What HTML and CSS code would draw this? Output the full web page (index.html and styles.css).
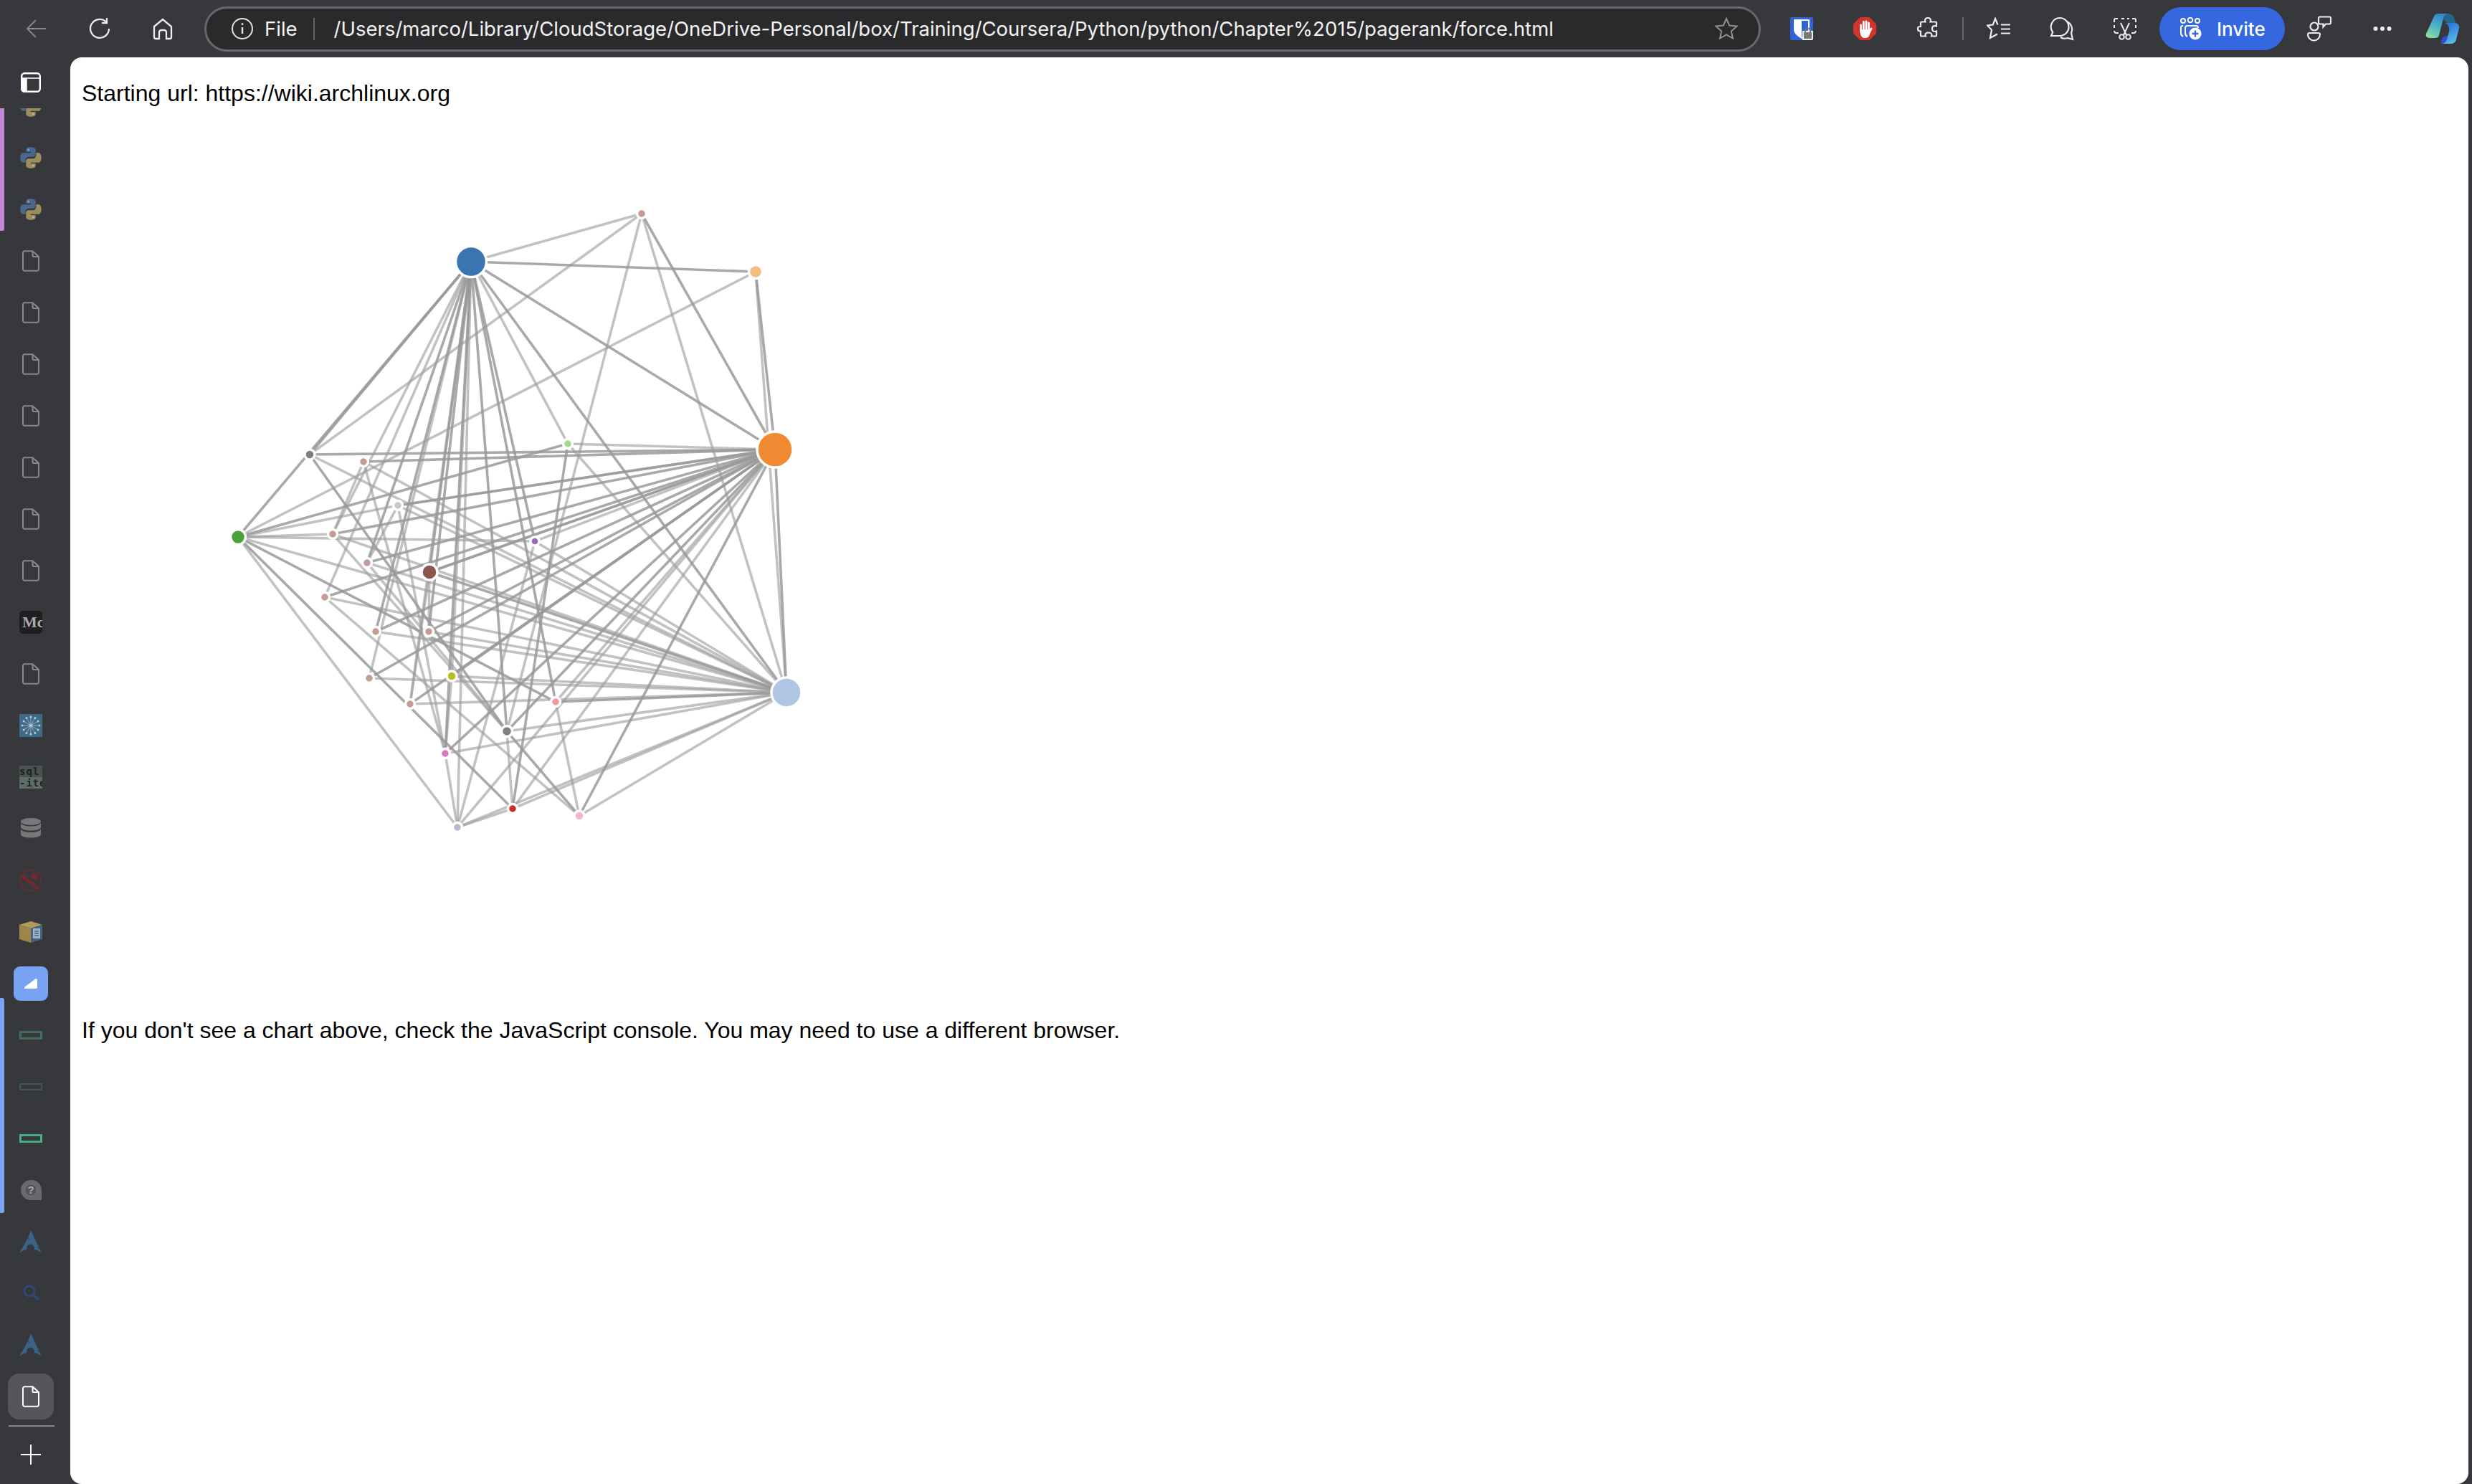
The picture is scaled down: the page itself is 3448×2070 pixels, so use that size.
FILE: index.html
```html
<!DOCTYPE html>
<html lang="en">
<head>
  <meta charset="UTF-8" />
  <title>Force Directed Layout</title>
  <link rel="stylesheet" href="styles.css">
</head>
<body>

  <!-- shared icons -->
  <svg class="sprite" xmlns="http://www.w3.org/2000/svg">
    <defs>
      <linearGradient id="cp-left" x1="0.7" y1="0" x2="0.3" y2="1"><stop offset="0" stop-color="#2f86c9"/><stop offset="0.55" stop-color="#4fb3c8"/><stop offset="1" stop-color="#86dca0"/></linearGradient>
      <linearGradient id="cp-right" x1="0.3" y1="0" x2="0.7" y2="1"><stop offset="0" stop-color="#2a6fd0"/><stop offset="1" stop-color="#5cc2ee"/></linearGradient>
    </defs>
    <symbol id="i-doc" viewBox="0 0 24 30"><path d="M3.300 1.200h11.200L23 9v17.500a2.300 2.300 0 0 1-2.300 2.300H3.300A2.300 2.300 0 0 1 1 26.500V3.500a2.300 2.300 0 0 1 2.300-2.300zM14.500 1.500V7.500a1.500 1.500 0 0 0 1.500 1.500H23" fill="none" stroke="currentColor" stroke-width="2"/></symbol>
    <symbol id="i-python" viewBox="0 0 24 24">
      <path fill="#4a688c" d="M12 1C8 1 7 2.500 7 4v2h5.200v1H4C2 7 1 9 1 12s1 5 3 5h2.500v-2.500C6.500 12.500 8 11 10 11h4.500c1.500 0 2.500-1 2.500-2.500V4c0-1.800-2-3-5-3z"/>
      <path fill="#9c8e5c" d="M12 1C8 1 7 2.500 7 4v2h5.200v1H4C2 7 1 9 1 12s1 5 3 5h2.500v-2.500C6.500 12.500 8 11 10 11h4.500c1.500 0 2.500-1 2.500-2.500V4c0-1.800-2-3-5-3z" transform="rotate(180 12 12)"/>
      <circle cx="9.500" cy="3.700" r="1" fill="#93a5ba"/><circle cx="14.500" cy="20.300" r="1" fill="#c4bc94"/>
    </symbol>
    <symbol id="i-arch" viewBox="1.500 2 21 20"><path fill="currentColor" d="M12 2c-1 2.400-1.600 4-2.700 6.400.7.700 1.500 1.600 2.900 2.500-1.500-.6-2.500-1.200-3.300-1.900C7.300 12.200 5 16.700 1.500 22c2.800-1.600 4.900-2.600 6.900-3-.1-.4-.1-.8-.1-1.200 0-2 1.600-3.600 3.600-3.500s3.400 1.700 3.400 3.700c0 .4 0 .7-.1 1 2 .4 4.100 1.400 6.800 3-.6-1-1.100-2-1.600-2.800-.8-.7-1.700-1.500-3.400-2.400 1.200.3 2 .7 2.700 1.100C15.600 9.700 14.200 5.600 12 2z"/></symbol>
  </svg>

  <div class="browser">

    <header class="toolbar">
      <div class="nav">
        <button class="tool-btn dim"><svg width="30" height="28" viewBox="0 0 30 28"><path d="M28 14H3M14 2 2 14l12 12" fill="none" stroke="currentColor" stroke-width="2"/></svg></button>
        <button class="tool-btn"><svg width="32" height="32" viewBox="0 0 32 32"><path d="M25 6.500A13 13 0 1 0 29 16M26 1v7h-7" fill="none" stroke="currentColor" stroke-width="2.300"/></svg></button>
        <button class="tool-btn"><svg width="30" height="32" viewBox="0 0 30 32"><path d="M3 13 15 3l12 10v15a2 2 0 0 1-2 2h-5v-9a3 3 0 0 0-3-3h-4a3 3 0 0 0-3 3v9H5a2 2 0 0 1-2-2z" fill="none" stroke="currentColor" stroke-width="2.300"/></svg></button>
      </div>

      <div class="url-bar">
        <svg class="url-info" width="32" height="32" viewBox="0 0 32 32"><circle cx="16" cy="16" r="14" fill="none" stroke="currentColor" stroke-width="2"/><path d="M16 14v9" stroke="currentColor" stroke-width="2.400"/><circle cx="16" cy="9.500" r="1.500" fill="currentColor"/></svg>
        <span class="url-scheme">File</span>
        <span class="url-divider"></span>
        <span class="url-text">/Users/marco/Library/CloudStorage/OneDrive-Personal/box/Training/Coursera/Python/python/Chapter%2015/pagerank/force.html</span>
        <svg class="url-star" width="34" height="34" viewBox="0 0 34 34"><path d="m17 3 4.200 9.500 10.300 1.100-7.700 6.900 2.200 10.100L17 25.400l-9 5.200 2.200-10.100-7.700-6.900 10.300-1.100z" fill="none" stroke="currentColor" stroke-width="2"/></svg>
      </div>

      <div class="actions">
        <button class="tool-btn">
          <svg width="32" height="32" viewBox="0 0 32 32"><rect width="32" height="32" rx="2" fill="#3062d8"/><path d="M5 3h22v14c0 6-6 10-11 13C11 27 5 23 5 17z" fill="#fff"/><path d="M16 5h9v12c0 4-4 8-9 11z" fill="#3062d8"/><path d="M17 32V19h15v11a2 2 0 0 1-2 2z" fill="#eee"/><rect x="19" y="21" width="11" height="9" rx="1" fill="#77787a"/><path d="M21 21v-2a3.500 3.500 0 0 1 7 0v2" fill="none" stroke="#77787a" stroke-width="2"/></svg>
        </button>
        <button class="tool-btn">
          <svg width="32" height="32" viewBox="0 0 32 32"><path d="M9.500 0h13L32 9.500v13L22.500 32h-13L0 22.500v-13z" fill="#d0342a"/><g stroke="#fff" stroke-width="2.800" stroke-linecap="round"><path d="M10.500 11v9M14.300 6.500v11M18 6v11M21.500 8v10M25 16l-3 6"/></g><path d="M9 17h14v5c0 5-3 7-7 7-3 0-5-2-6-5z" fill="#fff"/></svg>
        </button>
        <button class="tool-btn">
          <svg width="30" height="34" viewBox="0 0 30 34"><path d="M15 2c3 0 4 2 4 4l-.5 1.500H26a1 1 0 0 1 1 1v5l-2-.5c-3 0-4 2-4 4s1 4 4 4l2-.5v6a1 1 0 0 1-1 1h-6l.5-1.500c0-2-2-3.500-5-3.500s-4 1.500-4 3.500l.5 1.500H6a1 1 0 0 1-1-1v-6H4c-2 0-3-1.500-3-3.500S2 14 4 14h1V8.500a1 1 0 0 1 1-1h5.500L11 6c0-2 1-4 4-4z" fill="none" stroke="currentColor" stroke-width="2.200"/></svg>
        </button>
        <span class="tool-sep"></span>
        <button class="tool-btn">
          <svg width="34" height="32" viewBox="0 0 34 32"><path d="M15.500 10.500 12 2 8.800 10.500 1 11.500l6 6L5 29l10-5.500M20 10.500h13M20 16.500h13M20 22.500h13" fill="none" stroke="currentColor" stroke-width="2.200"/></svg>
        </button>
        <button class="tool-btn">
          <svg width="34" height="34" viewBox="0 0 34 34"><path d="M14 2a12.500 12.500 0 0 1 0 25H2l2.300-5A12.500 12.500 0 0 1 14 2zM24 7c6 3 9 10 6 16l2 9-7-2c-3 1-7 1-10-1" fill="none" stroke="currentColor" stroke-width="2.200"/></svg>
        </button>
        <button class="tool-btn">
          <svg width="34" height="32" viewBox="0 0 34 32"><path d="M7 2H4a2 2 0 0 0-2 2v3M2 11v4M2 19c0 2 1 3 3 3h3M12 2h4M20 2h3M27 2h3a2 2 0 0 1 2 2v3M32 11v4M32 19c0 2-1 3-3 3h-3M11 8l8 17M23 8l-8 17" fill="none" stroke="currentColor" stroke-width="2"/><circle cx="12.500" cy="27.500" r="3.300" fill="#37383c" stroke="currentColor" stroke-width="2"/><circle cx="21.500" cy="27.500" r="3.300" fill="#37383c" stroke="currentColor" stroke-width="2"/></svg>
        </button>
        <button class="invite">
          <svg width="32" height="32" viewBox="0 0 32 32"><g fill="none" stroke="currentColor" stroke-width="2"><circle cx="5" cy="5" r="3"/><circle cx="15" cy="4" r="3.300"/><circle cx="25" cy="5" r="3"/><path d="M5 12c-3 0-3 1-3 3v7c0 3 1 4 3 5M11 12c-2 0-3 1-3 3v7c0 3 1 4 3 5M11 12h12c2 0 3 1 3 3"/></g><circle cx="22" cy="23" r="8.500" fill="#fff"/><path d="M22 18.500v9M17.500 23h9" stroke="#3568e0" stroke-width="2.400"/></svg>
          <span>Invite</span>
        </button>
        <button class="tool-btn">
          <svg width="34" height="36" viewBox="0 0 34 36"><g fill="none" stroke="currentColor" stroke-width="2.200"><circle cx="10" cy="15" r="5.500"/><path d="M3 24h13a2 2 0 0 1 2 2 8.500 8.500 0 0 1-17 0 2 2 0 0 1 2-2zM18 1.500h13a2 2 0 0 1 2 2v6a2 2 0 0 1-2 2h-5l-3.500 4v-4H18a2 2 0 0 1-2-2v-6a2 2 0 0 1 2-2z"/></g></svg>
        </button>
        <button class="tool-btn"><svg width="26" height="8" viewBox="0 0 26 8"><g fill="currentColor"><circle cx="3.500" cy="4" r="3"/><circle cx="13" cy="4" r="3"/><circle cx="22.500" cy="4" r="3"/></g></svg></button>
        <button class="tool-btn copilot">
          <svg width="48" height="44" viewBox="0 0 48 44"><path d="M26 10c-1-3 1-9 5-9 4 0 8 2 9 6l2 7-10 1z" fill="#21688f"/><path d="M24 34l-3 9h13c3 0 4-2 4-4l-6-8z" fill="#2a4fd0"/><path d="M12 5c1-3 4-4 7-4h12c-3 1-5 3-6 7l-6 23c-1 3-3 4-6 4H6c-4 0-6-3-5-6z" fill="url(#cp-left)"/><path d="M27 14h14c4 0 7 3 6 7l-4 16c-1 4-4 6-8 6H24c3-1 5-3 6-6l3-11c1-4 0-10-6-12z" fill="url(#cp-right)"/></svg>
        </button>
      </div>
    </header>

    <nav class="sidebar">
      <div class="side-top">
        <svg width="28" height="28" viewBox="0 0 28 28"><rect x="1.200" y="1.200" width="25.600" height="25.600" rx="4" fill="none" stroke="#fff" stroke-width="2.400"/><path d="M1 8h26M1 8h7v19H5a4 4 0 0 1-4-4z" fill="#fff" stroke="#fff" stroke-width="1.500"/></svg>
      </div>

      <div class="tabs">
        <div class="tab-group purple">
          <div class="tab"><svg class="ic-32" viewBox="0 0 24 24"><use href="#i-python"/></svg></div>
          <div class="tab"><svg class="ic-32" viewBox="0 0 24 24"><use href="#i-python"/></svg></div>
          <div class="tab"><svg class="ic-32" viewBox="0 0 24 24"><use href="#i-python"/></svg></div>
        </div>
        <div class="tab"><svg class="ic-doc"><use href="#i-doc"/></svg></div>
        <div class="tab"><svg class="ic-doc"><use href="#i-doc"/></svg></div>
        <div class="tab"><svg class="ic-doc"><use href="#i-doc"/></svg></div>
        <div class="tab"><svg class="ic-doc"><use href="#i-doc"/></svg></div>
        <div class="tab"><svg class="ic-doc"><use href="#i-doc"/></svg></div>
        <div class="tab"><svg class="ic-doc"><use href="#i-doc"/></svg></div>
        <div class="tab"><svg class="ic-doc"><use href="#i-doc"/></svg></div>
        <div class="tab"><span class="medium-icon">Mc</span></div>
        <div class="tab"><svg class="ic-doc"><use href="#i-doc"/></svg></div>
        <div class="tab">
          <svg class="ic-32" viewBox="0 0 32 32"><rect width="32" height="32" fill="#3f6a88"/><g stroke="#aebfcb" stroke-width="0.800"><path d="M16 16 16 4M16 16 22 5.500M16 16 26 10M16 16 28 16M16 16 26 22M16 16 22 26.500M16 16 16 28M16 16 10 26.500M16 16 6 22M16 16 4 16M16 16 6 10M16 16 10 5.500"/></g><g fill="#b7cad6"><circle cx="16" cy="16" r="2"/><circle cx="16" cy="4" r="1.500"/><circle cx="22" cy="5.500" r="1.500"/><circle cx="26" cy="10" r="1.500"/><circle cx="28" cy="16" r="1.500"/><circle cx="26" cy="22" r="1.500"/><circle cx="22" cy="26.500" r="1.500"/><circle cx="16" cy="28" r="1.500"/><circle cx="10" cy="26.500" r="1.500"/><circle cx="6" cy="22" r="1.500"/><circle cx="4" cy="16" r="1.500"/><circle cx="6" cy="10" r="1.500"/><circle cx="10" cy="5.500" r="1.500"/></g></svg>
        </div>
        <div class="tab"><span class="sqlite-icon">sql<br>-ite</span></div>
        <div class="tab">
          <svg class="ic-32" viewBox="0 0 32 32"><g fill="#77787a"><ellipse cx="16" cy="6" rx="14" ry="5"/><path d="M2 8c2 6 26 6 28 0v6c-2 6-26 6-28 0zM2 16.500c2 6 26 6 28 0V24c-1 6-27 6-28 0z"/></g></svg>
        </div>
        <div class="tab">
          <svg class="ic-32" viewBox="0 0 32 32"><circle cx="16" cy="16" r="14.500" fill="none" stroke="#6d2b2f" stroke-width="1.600"/><path d="M2 10l6-2 4 6 8 4 6 8-3 3-7-7-8-5zM17 5l7 2 1 8-8-1z" fill="#6d2b2f"/></svg>
        </div>
        <div class="tab">
          <svg class="ic-32" viewBox="0 0 32 32"><path d="M0 6 16 1l16 5-16 5z" fill="#b59a60"/><path d="M0 6l16 5v20L0 26z" fill="#a08548"/><path d="M16 11l16-5v20l-16 5z" fill="#44657f"/><rect x="19" y="11" width="10" height="14" fill="#a0b2c4"/><path d="M21 15h6M21 18h6M21 21h6" stroke="#44657f" stroke-width="1.500"/></svg>
        </div>
        <div class="tab"><span class="active-app"><svg width="18" height="14" viewBox="0 0 18 14"><path d="M16 0 0 12a1 1 0 0 0 1 2h15a2 2 0 0 0 2-2V2a2 2 0 0 0-2-2z" fill="#fff"/></svg></span></div>
        <div class="tab-group blue">
          <div class="tab"><span class="green-rect"></span></div>
          <div class="tab"><span class="green-rect thin"></span></div>
          <div class="tab"><span class="green-rect bright"></span></div>
          <div class="tab">
            <svg class="ic-32" viewBox="0 0 32 32"><path d="M16 2a14 14 0 1 0 0 28h15V16A14 14 0 0 0 16 2z" fill="#68696b"/><circle cx="16" cy="16" r="8.500" fill="#55565a" stroke="#7a7b7d"/><text class="help-mark" x="16" y="21">?</text></svg>
          </div>
        </div>
        <div class="tab arch"><svg class="ic-32"><use href="#i-arch"/></svg></div>
        <div class="tab search"><svg class="ic-32" viewBox="0 0 32 32"><circle cx="14" cy="13" r="7" fill="none" stroke="currentColor" stroke-width="3"/><path d="m19 18 8 7" stroke="currentColor" stroke-width="3"/></svg></div>
        <div class="tab arch"><svg class="ic-32"><use href="#i-arch"/></svg></div>
      </div>

      <div class="tab current"><span class="current-box"><svg class="ic-doc"><use href="#i-doc"/></svg></span></div>
      <div class="side-rule"></div>
      <div class="side-add"><svg width="28" height="28" viewBox="0 0 28 28"><path d="M14 0v28M0 14h28" stroke="#fff" stroke-width="2"/></svg></div>
    </nav>

    <main class="page">
      <p>Starting url: https://wiki.archlinux.org</p>
      <svg id="chart" class="chart" viewBox="114 165 1400 1238"></svg>
      <p>If you don't see a chart above, check the JavaScript console. You may need to use a different browser.</p>
    </main>

  </div>

  <script src="force.js"></script>
</body>
</html>
```

FILE: styles.css
```css
* {
  box-sizing: border-box;
}

html, body {
  margin: 0;
  padding: 0;
  height: 100%;
  overflow: hidden;
}

body {
  background-color: #37383c;
  font-family: Inter, 'Liberation Sans', sans-serif;
}

.sprite {
  position: absolute;
  width: 0;
  height: 0;
}

.browser {
  display: grid;
  grid-template-columns: 98px 1fr;
  grid-template-rows: 80px 1fr;
  height: 2070px;
}

/* top bar */

.toolbar {
  grid-column: 1 / 3;
  display: flex;
  align-items: center;
  padding: 0 1px 0 7px;
  color: #ececec;
}

.nav {
  display: flex;
  margin-right: 14px;
}

.tool-btn {
  display: flex;
  align-items: center;
  justify-content: center;
  width: 88px;
  height: 60px;
  padding: 0;
  border: none;
  background: none;
  color: inherit;
}

.tool-btn.dim {
  color: #85868a;
}

.tool-btn.copilot {
  width: 80px;
}

.url-bar {
  flex: 1;
  display: flex;
  align-items: center;
  height: 63px;
  padding: 0 28px 0 37px;
  background-color: #2a2a2c;
  border: 3px solid #67686b;
  border-radius: 32px;
  font-size: 27.5px;
  color: #f2f2f2;
}

.url-info {
  flex: none;
  margin-left: -3px;
  color: #e4e4e4;
}

.url-scheme {
  margin-left: 15px;
}

.url-divider {
  width: 2px;
  height: 31px;
  margin: 0 27px 0 22px;
  background-color: #66676a;
}

.url-text {
  flex: 1;
  white-space: nowrap;
}

.url-star {
  color: #8f9093;
}

.actions {
  flex: none;
  display: flex;
  align-items: center;
  margin-left: 13px;
}

.tool-sep {
  width: 2px;
  height: 32px;
  margin: 0 5px 0 4px;
  background-color: #66676a;
}

.invite {
  display: flex;
  align-items: center;
  width: 175px;
  height: 60px;
  margin: 0 4px;
  padding: 0 0 0 28px;
  gap: 20px;
  border: none;
  border-radius: 30px;
  background-color: #3568e0;
  color: #fff;
  font-family: inherit;
  font-size: 26px;
  font-weight: 500;
}

/* left tab strip */

.sidebar {
  display: flex;
  flex-direction: column;
  min-height: 0;
  padding-right: 12px;
}

.side-top {
  flex: none;
  display: flex;
  justify-content: center;
  height: 71px;
  padding-top: 21px;
}

.tabs {
  flex: none;
  height: 1761px;
  overflow: hidden;
}

.tab {
  flex: none;
  display: flex;
  align-items: center;
  justify-content: center;
  height: 72px;
  color: #87888b;
}

.tabs > .tab-group.purple {
  margin-top: -39px;
}

.tab-group {
  position: relative;
}

.tab-group::before {
  content: "";
  position: absolute;
  left: 0;
  width: 6px;
  border-radius: 0 3px 3px 0;
}

.tab-group.purple::before {
  top: 0;
  bottom: 6px;
  background-color: #c285d8;
}

.tab-group.blue::before {
  top: -16px;
  bottom: 4px;
  background-color: #78a4f4;
}

.ic-32 {
  width: 32px;
  height: 32px;
}

.ic-doc {
  width: 24px;
  height: 30px;
}

.medium-icon {
  display: block;
  width: 32px;
  height: 32px;
  overflow: hidden;
  padding-left: 4px;
  border-radius: 5px;
  background-color: #1f1f21;
  color: #a9a9a9;
  font: bold 22px/32px 'Liberation Serif', serif;
  white-space: nowrap;
}

.sqlite-icon {
  display: block;
  width: 32px;
  height: 32px;
  overflow: hidden;
  background: linear-gradient(#4b5350 50%, #5d6c66 50%);
  color: #1f2224;
  font: bold 14px/16px 'DejaVu Sans Mono', monospace;
  letter-spacing: 1px;
  white-space: nowrap;
}

.active-app {
  display: flex;
  align-items: center;
  justify-content: center;
  width: 48px;
  height: 48px;
  border-radius: 9px;
  background-color: #78a3f3;
}

.green-rect {
  display: block;
  width: 32px;
  height: 12px;
  border: 3px solid #3f6e5c;
}

.green-rect.thin {
  height: 10px;
  border-width: 2px;
  border-color: #3c5a50;
}

.green-rect.bright {
  border-color: #4cae87;
}

.help-mark {
  fill: #a9a9ab;
  font: bold 15px 'Liberation Sans', sans-serif;
  text-anchor: middle;
}

.arch {
  color: #38648a;
}

.search {
  color: #2d4a78;
}

.tab.current {
  color: #fff;
}

.current-box {
  display: flex;
  align-items: center;
  justify-content: center;
  width: 64px;
  height: 64px;
  border-radius: 16px;
  background-color: #55565a;
}

.side-rule {
  flex: none;
  height: 2px;
  margin: 4px 10px 0 12px;
  background-color: #85868a;
}

.side-add {
  flex: none;
  display: flex;
  justify-content: center;
  padding-top: 25px;
}

/* page content */

.page {
  min-width: 0;
  min-height: 0;
  margin-right: 5px;
  padding: 16px;
  overflow: hidden;
  background-color: #fff;
  border-radius: 16px;
  font-family: 'Liberation Sans', Arial, sans-serif;
  font-size: 32px;
  line-height: 37px;
  color: #000;
}

.page p {
  margin: 16px 0;
}

.chart {
  display: block;
  width: 1400px;
  height: 1238px;
}

.link {
  stroke: #999;
  stroke-width: 3.6;
  stroke-opacity: 0.6;
}

.link.strong {
  stroke-opacity: 0.84;
}

.node {
  stroke: #fff;
  stroke-width: 3.5;
}
```

FILE: force.js
```js
// node positions are the settled layout of the force graph
const nodes = {
  A: [657, 365, 21.5, "#3a75b0"],
  B: [1081, 627, 25, "#f08a32"],
  C: [1097, 966, 21, "#b0c5e4"],
  D: [332, 749, 10.5, "#4ba23a"],
  E: [599, 798, 11, "#8c564b"],
  F: [895, 298, 6.5, "#c49c94"],
  G: [1054, 379, 9.5, "#f5bc80"],
  H: [432, 634, 7, "#7f7f7f"],
  I: [507, 644, 6.5, "#c49c94"],
  J: [555, 705, 6.5, "#c7c7c7"],
  K: [792, 619, 6.5, "#a0dc8c"],
  L: [746, 755, 6, "#9467bd"],
  M: [464, 745, 6.5, "#c49c94"],
  N: [512, 785, 6.5, "#c49c94"],
  O: [453, 833, 6.5, "#c49c94"],
  P: [524, 881, 6.5, "#c49c94"],
  Q: [598, 881, 6.5, "#c49c94"],
  R: [515, 946, 6.5, "#c49c94"],
  S: [630, 943, 7, "#bcbd22"],
  T: [572, 982, 6.5, "#c49c94"],
  U: [707, 1020, 7.5, "#7f7f7f"],
  V: [775, 979, 6.5, "#f09a96"],
  W: [621, 1051, 6.5, "#d977c2"],
  X: [715, 1128, 6.5, "#c8302e"],
  Y: [638, 1154, 6.5, "#c5b0d5"],
  Z: [808, 1138, 7, "#f0b6d2"]
};

const lightLinks = "AF AM AO AR AS AT AY AK FH FC FU GD GC KB KC HC IM IW IC NJ DJ DC DL DM DY JC JW JB MC MU NC NU OC OZ PC QC RC SW SC TC WC WY YL YX YB ET EQ EB XU XB XC YC ZC ZV UC LC LB VB";
const strongLinks = "AG AB AH AD AN AP AE AQ AW AU AL AC AV FB GB BC DK DV DX HB HU IB KX BN BE BJ BM BO BP BQ BR BS BT BU BW BZ EC UZ CV";

const chart = document.getElementById("chart");
const SVG_NS = "http://www.w3.org/2000/svg";

function addLinks(list, className) {
  list.split(" ").forEach((pair) => {
    const a = nodes[pair[0]];
    const b = nodes[pair[1]];
    const line = document.createElementNS(SVG_NS, "line");
    line.setAttribute("class", className);
    line.setAttribute("x1", a[0]);
    line.setAttribute("y1", a[1]);
    line.setAttribute("x2", b[0]);
    line.setAttribute("y2", b[1]);
    chart.appendChild(line);
  });
}

addLinks(lightLinks, "link");
addLinks(strongLinks, "link strong");

Object.values(nodes).forEach(([x, y, r, color]) => {
  const circle = document.createElementNS(SVG_NS, "circle");
  circle.setAttribute("class", "node");
  circle.setAttribute("cx", x);
  circle.setAttribute("cy", y);
  circle.setAttribute("r", r);
  circle.setAttribute("fill", color);
  chart.appendChild(circle);
});
```
